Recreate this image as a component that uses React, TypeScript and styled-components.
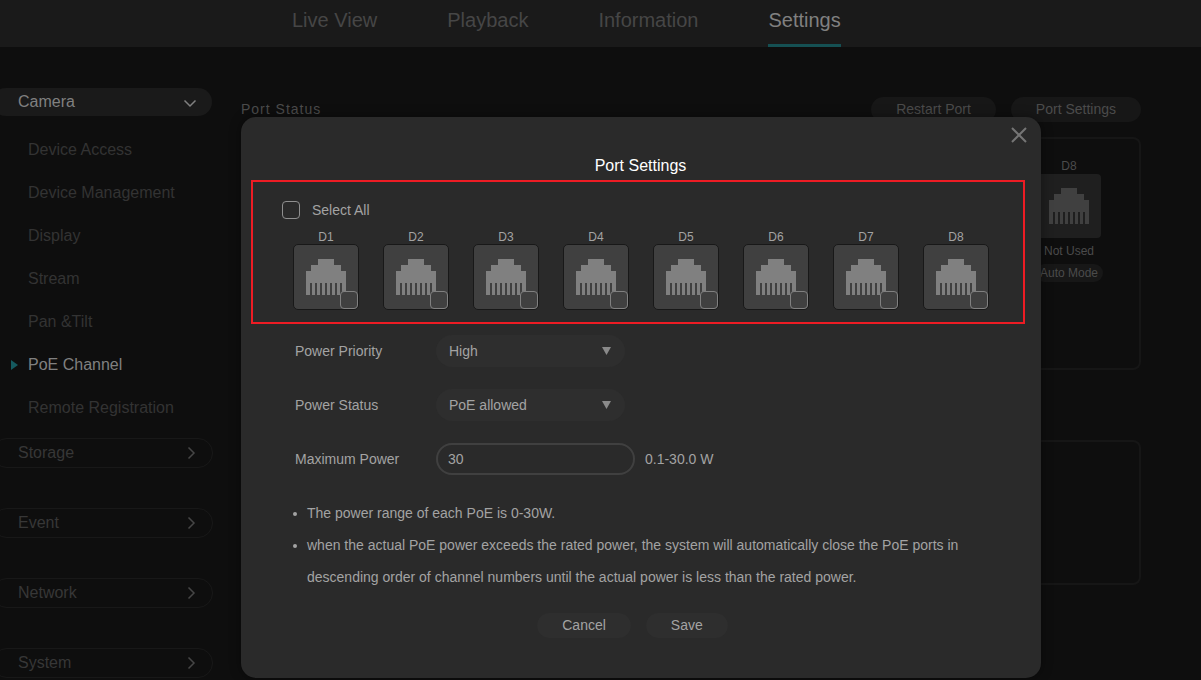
import React, { useState } from "react";
import styled, { createGlobalStyle } from "styled-components";

const GlobalStyle = createGlobalStyle`
  *, *::before, *::after { box-sizing: border-box; }
  body {
    margin: 0;
    background: #0e0e0e;
    font-family: "Liberation Sans", Arial, sans-serif;
    font-size: 14px;
    line-height: 16px;
  }
  button, input, select { font: inherit; color: inherit; }
  button { border: 0; padding: 0; background: none; cursor: pointer; }
`;

const Page = styled.div`
  position: relative;
  min-height: 100vh;
  overflow: hidden;
`;

const TopBar = styled.header`
  height: 47px;
  padding-left: 292px;
  background: #1a1a1a;
`;

const TopNav = styled.nav`
  display: flex;
  gap: 70px;
  height: 100%;
`;

const TopLink = styled.a<{ $active?: boolean }>`
  padding-top: 8px;
  font-size: 20px;
  line-height: 24px;
  text-decoration: none;
  white-space: nowrap;
  color: ${(p) => (p.$active ? "#808080" : "#464646")};
  border-bottom: 3px solid ${(p) => (p.$active ? "#155053" : "transparent")};
`;

const Body = styled.div`
  display: flex;
  align-items: flex-start;
`;

const Sidebar = styled.nav`
  flex: 0 0 221px;
  margin-left: -8px;
  padding-top: 41px;
  font-size: 16px;
`;

const Group = styled.button<{ $open?: boolean }>`
  display: flex;
  align-items: center;
  justify-content: space-between;
  width: ${(p) => (p.$open ? "220px" : "221px")};
  height: ${(p) => (p.$open ? "28px" : "30px")};
  padding: 0 ${(p) => (p.$open ? "15px" : "14px")} 0 ${(p) => (p.$open ? "26px" : "25px")};
  border: ${(p) => (p.$open ? "0" : "1px solid #181818")};
  border-radius: 15px;
  background: ${(p) => (p.$open ? "#1a1a1a" : "transparent")};
  color: ${(p) => (p.$open ? "#808080" : "#373737")};
`;

const GroupList = styled.div`
  display: flex;
  flex-direction: column;
  gap: 40px;
  padding-bottom: 2px;
`;

const SubMenu = styled.ul`
  margin: 12px 0 9px;
  padding: 0;
  list-style: none;
`;

const SubLink = styled.a<{ $active?: boolean }>`
  display: flex;
  align-items: center;
  height: 43px;
  padding-left: 18px;
  text-decoration: none;
  color: ${(p) => (p.$active ? "#808080" : "#333333")};
`;

const Marker = styled.span`
  display: flex;
  width: 18px;
`;

const Main = styled.main`
  flex: 1;
  min-width: 0;
  padding: 50px 60px 0 28px;
`;

const StatusHead = styled.div`
  display: flex;
  align-items: center;
  gap: 15px;
  margin-bottom: 15px;
`;

const StatusTitle = styled.h1`
  flex: 1;
  margin: 0;
  padding-bottom: 2px;
  font-size: 14px;
  font-weight: 400;
  letter-spacing: 1px;
  color: #4b4b4b;
`;

const Pill = styled.button<{ $raised?: boolean }>`
  height: 25px;
  padding: 0 25px 2px;
  border-radius: 13px;
  background: ${(p) => (p.$raised ? "#2e2e2e" : "#171717")};
  color: ${(p) => (p.$raised ? "#a3a3a3" : "#4b4b4b")};
`;

const Panel = styled.section<{ $tall?: boolean }>`
  display: flex;
  justify-content: flex-end;
  min-height: ${(p) => (p.$tall ? "233px" : "145px")};
  margin-bottom: 70px;
  padding: 19px 37px;
  border: 2px solid #161616;
  border-radius: 8px;
`;

const PortStatus = styled.div`
  display: flex;
  flex-direction: column;
  align-items: center;
  width: 66px;
  font-size: 12px;
  color: #4b4b4b;
`;

const StatusTile = styled.div`
  display: flex;
  align-items: center;
  justify-content: center;
  width: 64px;
  height: 64px;
  margin-bottom: 5px;
  border-radius: 4px;
  background: #1f1f1f;
  color: #404040;
`;

const ModeTag = styled.span`
  margin-top: 5px;
  padding: 1px 5px;
  border-radius: 9px;
  background: #171717;
  white-space: nowrap;
`;

const Overlay = styled.div`
  position: absolute;
  top: 0;
  left: 0;
  right: 0;
  padding: 117px 160px 2px 241px;
`;

const Dialog = styled.section`
  position: relative;
  padding: 41px 16px 40px 10px;
  border-radius: 15px;
  background: #2a2a2a;
  color: #a3a3a3;
  box-shadow: 0 0 12px rgba(0, 0, 0, 0.4);
`;

const DialogTitle = styled.h2`
  margin: 0 0 6px;
  padding-left: 5px;
  font-size: 16px;
  line-height: 16px;
  font-weight: 400;
  text-align: center;
  color: #ffffff;
`;

const CloseButton = styled.button`
  position: absolute;
  top: 10px;
  right: 14px;
  display: flex;
  color: #757575;
`;

const PortBox = styled.fieldset`
  min-width: 0;
  height: 144px;
  margin: 0;
  padding: 19px 29px 0;
  border: 2px solid #ed1c24;
`;

const SelectAll = styled.label`
  display: flex;
  align-items: center;
  gap: 12px;
  height: 18px;
`;

const Check = styled.input`
  appearance: none;
  display: block;
  width: 18px;
  height: 18px;
  margin: 0;
  border: 1px solid #8f8f8f;
  border-radius: 4px;
  background: transparent;
  &:checked { background: #1fa3a8; }
`;

const Ports = styled.div`
  display: flex;
  gap: 24px;
  margin-top: 11px;
  padding-left: 11px;
`;

const Port = styled.label`
  display: flex;
  flex-direction: column;
  align-items: center;
  font-size: 12px;
  line-height: 14px;
`;

const PortTile = styled.span`
  position: relative;
  display: flex;
  align-items: center;
  justify-content: center;
  width: 66px;
  height: 66px;
  border: 1px solid #181818;
  border-radius: 5px;
  background: #404040;
  color: #808080;
`;

const PortCheck = styled(Check)`
  position: absolute;
  right: 0;
  bottom: 0;
  border-color: #808080;
  background: #404040;
`;

const Form = styled.div`
  display: grid;
  gap: 22px;
  padding: 11px 0 22px 44px;
`;

const Row = styled.div`
  display: flex;
  align-items: center;
  height: 32px;
`;

const RowLabel = styled.label`
  width: 141px;
`;

const SelectWrap = styled.span`
  position: relative;
  width: 189px;
  svg {
    position: absolute;
    right: 14px;
    top: 12px;
    pointer-events: none;
  }
`;

const Select = styled.select`
  appearance: none;
  display: block;
  width: 100%;
  height: 32px;
  padding: 0 30px 0 13px;
  border: 0;
  border-radius: 16px;
  background: #2e2e2e;
`;

const PowerInput = styled.input`
  width: 199px;
  height: 32px;
  margin-right: 10px;
  padding: 0 10px;
  border: 2px solid #404040;
  border-radius: 16px;
  background: transparent;
`;

const Notes = styled.ul`
  margin: 0 20px 20px 42px;
  padding: 0;
  list-style: none;
  line-height: 32px;
`;

const Note = styled.li`
  display: flex;
  gap: 10px;
  &::before {
    content: "";
    flex: 0 0 4px;
    height: 4px;
    margin-top: 15px;
    border-radius: 2px;
    background: #a3a3a3;
  }
`;

const Actions = styled.div`
  display: flex;
  justify-content: center;
  gap: 15px;
  padding-right: 11px;
`;

const PortIcon = () => (
  <svg width="40" height="36" viewBox="0 0 40 36" fill="currentColor" shapeRendering="crispEdges" aria-hidden="true">
    <path d="M12 0H28V6H35V12H40V36H36V24H34V36H31V24H29V36H26V24H24V36H21V24H19V36H16V24H14V36H11V24H9V36H6V24H4V36H0V12H5V6H12Z" />
  </svg>
);

const Caret = () => (
  <svg width="9" height="8" viewBox="0 0 9 8" fill="#8a8a8a" aria-hidden="true">
    <path d="M0 0h9L4.500 8z" />
  </svg>
);

const ChevronRight = () => (
  <svg width="14" height="14" viewBox="0 0 14 14" fill="none" stroke="#464646" strokeWidth="1.500" aria-hidden="true">
    <path d="M4.500 1.500L10 7l-5.500 5.500" />
  </svg>
);

const ChevronDown = () => (
  <svg width="14" height="14" viewBox="0 0 14 14" fill="none" stroke="#808080" strokeWidth="1.500" aria-hidden="true">
    <path d="M1.500 5.500L7 11l5.500-5.500" />
  </svg>
);

const topItems = ["Live View", "Playback", "Information", "Settings"];
const cameraItems = [
  "Device Access",
  "Device Management",
  "Display",
  "Stream",
  "Pan &Tilt",
  "PoE Channel",
  "Remote Registration",
];
const groups = ["Storage", "Event", "Network", "System"];
const ports = ["D1", "D2", "D3", "D4", "D5", "D6", "D7", "D8"];

export default function App() {
  const [chosen, setChosen] = useState<string[]>([]);
  const [power, setPower] = useState("30");

  const toggle = (port: string) =>
    setChosen((now) => (now.includes(port) ? now.filter((p) => p !== port) : [...now, port]));

  return (
    <Page>
      <GlobalStyle />
      <TopBar>
        <TopNav>
          {topItems.map((item) => (
            <TopLink key={item} href="#" $active={item === "Settings"}>
              {item}
            </TopLink>
          ))}
        </TopNav>
      </TopBar>

      <Body>
        <Sidebar>
          <Group $open>
            Camera
            <ChevronDown />
          </Group>
          <SubMenu>
            {cameraItems.map((item) => {
              const active = item === "PoE Channel";
              return (
                <li key={item}>
                  <SubLink href="#" $active={active}>
                    <Marker>
                      {active && (
                        <svg width="9" height="10" viewBox="0 0 9 10" fill="#155a5f" aria-hidden="true">
                          <path d="M1 0l7 5-7 5z" />
                        </svg>
                      )}
                    </Marker>
                    {item}
                  </SubLink>
                </li>
              );
            })}
          </SubMenu>
          <GroupList>
            {groups.map((item) => (
              <Group key={item}>
                {item}
                <ChevronRight />
              </Group>
            ))}
          </GroupList>
        </Sidebar>

        <Main>
          <StatusHead>
            <StatusTitle>Port Status</StatusTitle>
            <Pill>Restart Port</Pill>
            <Pill>Port Settings</Pill>
          </StatusHead>
          <Panel $tall>
            <PortStatus>
              D8
              <StatusTile>
                <PortIcon />
              </StatusTile>
              Not Used
              <ModeTag>Auto Mode</ModeTag>
            </PortStatus>
          </Panel>
          <Panel />
        </Main>
      </Body>

      <Overlay>
        <Dialog role="dialog" aria-labelledby="dialog-title">
          <CloseButton aria-label="Close">
            <svg width="16" height="16" viewBox="0 0 16 16" fill="none" stroke="currentColor" strokeWidth="2" aria-hidden="true">
              <path d="M1 1l14 14M15 1L1 15" />
            </svg>
          </CloseButton>
          <DialogTitle id="dialog-title">Port Settings</DialogTitle>

          <PortBox>
            <SelectAll>
              <Check
                type="checkbox"
                checked={chosen.length === ports.length}
                onChange={(e) => setChosen(e.target.checked ? ports : [])}
              />
              Select All
            </SelectAll>
            <Ports>
              {ports.map((port) => (
                <Port key={port}>
                  {port}
                  <PortTile>
                    <PortIcon />
                    <PortCheck type="checkbox" checked={chosen.includes(port)} onChange={() => toggle(port)} />
                  </PortTile>
                </Port>
              ))}
            </Ports>
          </PortBox>

          <Form>
            <Row>
              <RowLabel htmlFor="priority">Power Priority</RowLabel>
              <SelectWrap>
                <Select id="priority" defaultValue="High">
                  <option>High</option>
                </Select>
                <Caret />
              </SelectWrap>
            </Row>
            <Row>
              <RowLabel htmlFor="status">Power Status</RowLabel>
              <SelectWrap>
                <Select id="status" defaultValue="PoE allowed">
                  <option>PoE allowed</option>
                </Select>
                <Caret />
              </SelectWrap>
            </Row>
            <Row>
              <RowLabel htmlFor="power">Maximum Power</RowLabel>
              <PowerInput id="power" value={power} onChange={(e) => setPower(e.target.value)} />
              0.1-30.0 W
            </Row>
          </Form>

          <Notes>
            <Note>The power range of each PoE is 0-30W.</Note>
            <Note>
              when the actual PoE power exceeds the rated power, the system will automatically close the PoE ports in
              descending order of channel numbers until the actual power is less than the rated power.
            </Note>
          </Notes>

          <Actions>
            <Pill $raised>Cancel</Pill>
            <Pill $raised>Save</Pill>
          </Actions>
        </Dialog>
      </Overlay>
    </Page>
  );
}
